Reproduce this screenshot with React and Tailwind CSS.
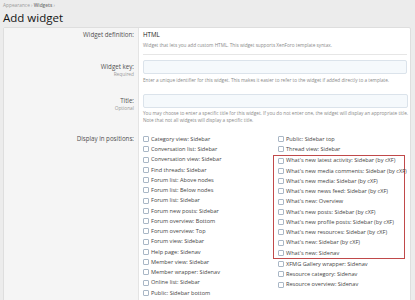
const leftPositions = [
  "Category view: Sidebar",
  "Conversation list: Sidebar",
  "Conversation view: Sidebar",
  "Find threads: Sidebar",
  "Forum list: Above nodes",
  "Forum list: Below nodes",
  "Forum list: Sidebar",
  "Forum new posts: Sidebar",
  "Forum overview: Bottom",
  "Forum overview: Top",
  "Forum view: Sidebar",
  "Help page: Sidenav",
  "Member view: Sidebar",
  "Member wrapper: Sidenav",
  "Online list: Sidebar",
  "Public: Sidebar bottom",
];

const rightTop = ["Public: Sidebar top", "Thread view: Sidebar"];

const rightMarked = [
  "What's new latest activity: Sidebar (by cXF)",
  "What's new media comments: Sidebar (by cXF)",
  "What's new media: Sidebar (by cXF)",
  "What's new news feed: Sidebar (by cXF)",
  "What's new: Overview",
  "What's new posts: Sidebar (by cXF)",
  "What's new profile posts: Sidebar (by cXF)",
  "What's new resources: Sidebar (by cXF)",
  "What's new: Sidebar (by cXF)",
  "What's new: Sidenav",
];

const rightBottom = [
  "XFMG Gallery wrapper: Sidenav",
  "Resource category: Sidenav",
  "Resource overview: Sidenav",
];

function Check({ label }) {
  return (
    <label className="flex h-[10.25px] items-center gap-[2px] whitespace-nowrap text-[5.6px] text-[#454545]">
      <span className="h-[6px] w-[6px] shrink-0 rounded-[1px] border border-[#a9b7c6] bg-white" />
      <span>{label}</span>
    </label>
  );
}

function Label({ text, hint, className = "" }) {
  return (
    <div className={"w-[134px] shrink-0 bg-[#f5f5f5] pr-[4px] text-right " + className}>
      <div className="text-[6.2px] leading-[8px] text-[#505050]">{text}</div>
      {hint && <div className="text-[4.8px] leading-[6px] text-[#9a9a9a]">{hint}</div>}
    </div>
  );
}

export default function App() {
  return (
    <div className="h-[300px] overflow-hidden bg-[#ececec] pl-[3px] pr-[4px] font-['Open_Sans',sans-serif]">
      <div className="pt-[2px] text-[4.8px] leading-[6px] text-[#9a9a9a]">
        Appearance › <span className="font-semibold text-[#777]">Widgets</span> ›
      </div>
      <h1 className="mt-[2px] text-[11.5px] leading-[16px] text-[#141414]">Add widget</h1>

      <div className="mt-[1px] rounded-t-[2px] border border-[#dedede] bg-white">
        {/* Widget definition */}
        <div className="flex">
          <Label text="Widget definition:" className="pt-[3px]" />
          <div className="flex-1 border-l border-[#e4e4e4] pl-[4px] pr-[3px]">
            <div className="pt-[3px]">
              <div className="text-[6.2px] leading-[8px] text-[#141414]">HTML</div>
              <div className="mt-[3px] text-[4.7px] leading-[6px] text-[#8a8a8a]">
                Widget that lets you add custom HTML. This widget supports XenForo template syntax.
              </div>
            </div>
            <div className="mt-[6px] border-b border-[#e6e6e6]" />
          </div>
        </div>

        {/* Widget key */}
        <div className="flex">
          <Label text="Widget key:" hint="Required" className="pt-[8px]" />
          <div className="flex-1 border-l border-[#e4e4e4] pl-[4px] pr-[3px] pt-[5px]">
            <div className="h-[13.5px] rounded-[2px] border border-[#dbe3eb] bg-[#f5f9fc]" />
            <div className="mt-[2px] text-[4.7px] leading-[8px] text-[#8a8a8a]">
              Enter a unique identifier for this widget. This makes it easier to refer to the widget if added directly to a template.
            </div>
          </div>
        </div>

        {/* Title */}
        <div className="flex">
          <Label text="Title:" hint="Optional" className="pt-[13.5px]" />
          <div className="flex-1 border-l border-[#e4e4e4] pl-[4px] pr-[3px] pt-[10.5px]">
            <div className="h-[14px] rounded-[2px] border border-[#dbe3eb] bg-[#f5f9fc]" />
            <div className="mt-[2px] whitespace-nowrap text-[4.7px] leading-[7px] text-[#8a8a8a]">
              You may choose to enter a specific title for this widget. If you do not enter one, the widget will display an appropriate title.
              <br />
              Note that not all widgets will display a specific title.
            </div>
          </div>
        </div>

        {/* Display in positions */}
        <div className="flex">
          <Label text="Display in positions:" className="pt-[11px]" />
          <div className="flex flex-1 border-l border-[#e4e4e4] pl-[4px] pt-[10px] pb-[10px]">
            <div className="flex w-[135px] flex-col">
              {leftPositions.map((p) => (
                <Check key={p} label={p} />
              ))}
            </div>
            <div className="flex flex-col">
              {rightTop.map((p) => (
                <Check key={p} label={p} />
              ))}
              <div className="-ml-[5px] w-[132px] border border-[#c0494a] pl-[4px]">
                {rightMarked.map((p) => (
                  <Check key={p} label={p} />
                ))}
              </div>
              {rightBottom.map((p) => (
                <Check key={p} label={p} />
              ))}
            </div>
          </div>
        </div>
      </div>
    </div>
  );
}
